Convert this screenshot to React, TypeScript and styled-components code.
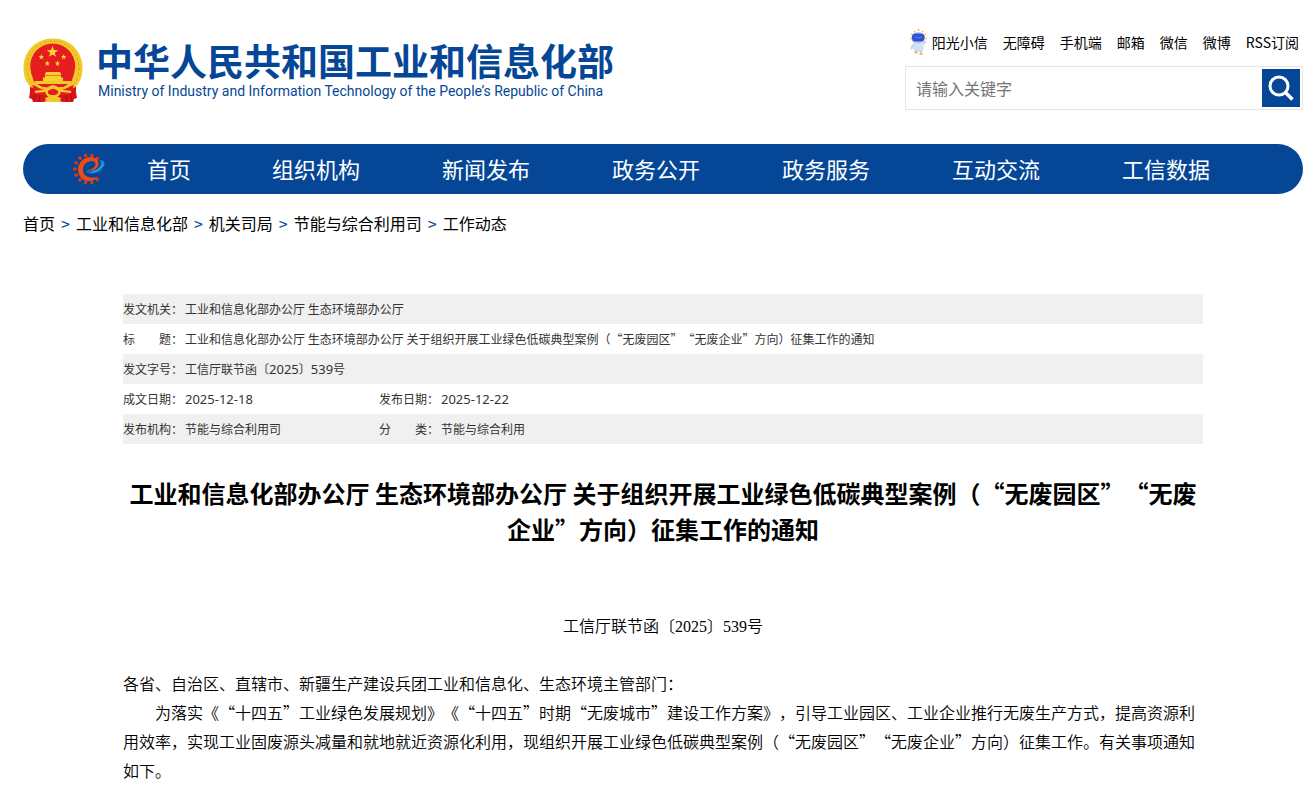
import React from 'react';
import styled, { createGlobalStyle } from 'styled-components';

const blue = '#054796';
const cjk = '"Noto Sans CJK SC", sans-serif';

const GlobalStyle = createGlobalStyle`
  *, *::before, *::after { box-sizing: border-box; }
  body {
    margin: 0;
    background: #fff;
    color: #000;
    font-family: ${cjk};
    font-size: 16px;
    text-spacing-trim: space-all;
  }
  a { color: inherit; text-decoration: none; }
`;

const Page = styled.div`
  padding: 0 11px 0 23px;
`;

const Header = styled.header`
  display: flex;
  justify-content: space-between;
  align-items: flex-start;
  height: 144px;
  padding-top: 29px;
`;

const Brand = styled.a`
  display: flex;
  gap: 13px;
  padding-top: 9px;
  color: ${blue};
`;

const BrandText = styled.span`
  display: flex;
  flex-direction: column;
  white-space: nowrap;
`;

const BrandName = styled.span`
  font-size: 37px;
  line-height: 44px;
  font-weight: 700;
`;

const BrandSub = styled.span`
  padding-left: 2px;
  font-family: Roboto, sans-serif;
  font-size: 14px;
  line-height: 18px;
`;

const Tools = styled.div`
  flex: 0 0 398px;
`;

const QuickLinks = styled.nav`
  display: flex;
  justify-content: flex-end;
  align-items: center;
  gap: 15px;
  height: 26px;
  padding-right: 4px;
  font-size: 14px;
  white-space: nowrap;
`;

const QuickLink = styled.a`
  display: flex;
  align-items: center;
  gap: 4px;
`;

const SearchForm = styled.form`
  display: flex;
  height: 44px;
  margin-top: 11px;
  padding: 2px;
  border: 1px solid #e5e5e5;
`;

const SearchInput = styled.input`
  flex: 1;
  min-width: 0;
  padding: 0 8px;
  border: 0;
  outline: 0;
  background: transparent;
  font-family: ${cjk};
  font-size: 16px;
  &::placeholder { color: #757575; }
`;

const SearchButton = styled.button`
  display: flex;
  align-items: center;
  justify-content: center;
  width: 38px;
  height: 38px;
  padding: 0;
  border: 0;
  background: ${blue};
`;

const MainNav = styled.nav`
  display: flex;
  align-items: center;
  height: 50px;
  padding: 0 52px 0 50px;
  border-radius: 25px;
  background: ${blue};
`;

const NavLink = styled.a<{ $short?: boolean }>`
  flex: ${(p) => (p.$short ? 124 : 170)} 1 0;
  padding-bottom: 2px;
  color: #fff;
  font-size: 22px;
  line-height: 48px;
  text-align: center;
  white-space: nowrap;
`;

const NavMark = styled.span`
  display: flex;
  flex: 0 0 34px;
`;

const Breadcrumb = styled.nav`
  display: flex;
  flex-wrap: wrap;
  gap: 6px;
  padding-top: 17px;
  line-height: 24px;
`;

const Separator = styled.span`
  color: ${blue};
`;

const Article = styled.main`
  padding: 59px 100px 0;
`;

const Meta = styled.table`
  width: 100%;
  border-collapse: collapse;
  table-layout: fixed;
  color: #333;
  font-size: 12px;
  line-height: 18px;
`;

const MetaRow = styled.tr`
  height: 30px;
  &:nth-child(odd) { background: #f0f0f0; }
`;

const MetaLabel = styled.th`
  padding: 0;
  font-weight: 400;
  text-align: left;
  white-space: nowrap;
`;

const LabelText = styled.span`
  display: flex;
  width: 60px;
  justify-content: space-between;
`;

const MetaValue = styled.td`
  padding: 0;
`;

const Digits = styled.span`
  font-family: "Noto Sans", sans-serif;
  font-size: 13px;
`;

const Title = styled.h1`
  margin: 31px 0 0;
  font-size: 24px;
  line-height: 36px;
  font-weight: 700;
  text-align: center;
`;

const Body = styled.div`
  padding-top: 64px;
  line-height: 29px;
  font-weight: 350;
`;

const DocNumber = styled.p`
  margin: 0 0 28px;
  text-align: center;
`;

const SerifDigits = styled.span`
  font-family: "Liberation Serif", serif;
`;

const Paragraph = styled.p<{ $indent?: boolean }>`
  margin: 0;
  text-indent: ${(p) => (p.$indent ? '2em' : '0')};
`;

const star = (cx: number, cy: number, r: number) =>
  Array.from({ length: 10 }, (_, i) => {
    const a = (Math.PI / 5) * i - Math.PI / 2;
    const d = i % 2 ? r * 0.4 : r;
    return `${(cx + d * Math.cos(a)).toFixed(2)},${(cy + d * Math.sin(a)).toFixed(2)}`;
  }).join(' ');

const Emblem = () => (
  <svg width="60" height="65" viewBox="0 0 60 65" aria-hidden="true">
    <path d="M7 46v8l-1 6 3 1 1 3h10l5-1h10l5 1h10l1-3 3-1-1-6v-8z" fill="#d8141c" />
    <path d="M30 .5C13 .5.5 13 .5 30c0 9 3 15 7 19 3 2 6 1 8 3h29c2-2 5-1 8-3 4-4 7-10 7-19C59.500 13 47 .5 30 .5z" fill="#f3c829" />
    <ellipse cx="30" cy="30" rx="26" ry="27" fill="none" stroke="#dda51c" strokeWidth="1" strokeDasharray="3 2" />
    <circle cx="29.700" cy="28" r="22.500" fill="#e51c20" />
    <path d="M8 34h43.500l-3 10-8 5H19l-8-5z" fill="#e51c20" />
    <polygon points={star(29.5, 14, 6)} fill="#fbd82f" />
    <polygon points={star(18.300, 19, 3)} fill="#fbd82f" />
    <polygon points={star(40.700, 19, 3)} fill="#fbd82f" />
    <polygon points={star(24.300, 25.500, 3)} fill="#fbd82f" />
    <polygon points={star(34.500, 25.500, 3)} fill="#fbd82f" />
    <path d="M23 34h14l1.500 3h-17zM22 37.500h16v2H22zM20 39.500h20v4H20z" fill="#f9d02c" />
    <path d="M11 43h38l-2 3H13z" fill="#f3c829" />
    <path d="M9 46c6 1 8 5 14 5 3 0 4-3 7-3s4 3 7 3c6 0 8-4 14-5l-3 11H12z" fill="#e51c20" />
    <path d="M9 46c6 1 8 5 14 5 3 0 4-3 7-3s4 3 7 3c6 0 8-4 14-5M12 54c5-1 9 0 12-2l6-3 6 3c3 2 7 1 12 2" fill="none" stroke="#f3c829" strokeWidth="2.200" />
    <ellipse cx="30" cy="54" rx="6.500" ry="4.500" fill="none" stroke="#f3c829" strokeWidth="2.500" />
    <path d="M22 60l8-3 8 3-1 4H23z" fill="#f3c829" />
    <path d="M13 56l-2 7M17 57l-1 7M47 56l2 7M43 57l1 7" stroke="#a90c12" strokeWidth="1" />
  </svg>
);

const GearMark = () => (
  <svg width="32" height="32" viewBox="0 0 32 32" aria-hidden="true">
    <g fill="#e2340f">
      {[50, 76, 102, 128, 154, 180, 206, 232, 258, 284, 310].map((a) => (
        <rect key={a} x="-1.500" y="-15.500" width="3" height="3.500" rx=".5" transform={`translate(15.500 16) rotate(${a + 90})`} />
      ))}
    </g>
    <path d="M25 23.500C21 29.500 11 29.500 7 23.500 2.500 16 6 7 14 4.500c7-2 12.500 2 11.500 7.500C24.500 16.500 18 19 13.500 17c3.500.3 8.500-2 9-5.500.3-3-3-4.500-6.500-3-6 2-8 9-4 13.500 3 3.200 8.500 3.500 13 1.500z" fill="#f04a14" />
    <path d="M12.500 17.500c4 2.500 12 1 15-5 .8-2 .2-4-1.500-5 3-.7 6.500.3 5.500 3.500-1.500 5.500-7.500 10-13 9.500-3-.3-5-1-6-3z" fill="#1686cf" />
    <path d="M19 18.500c5-.5 9-3.500 11-8" fill="none" stroke="#5cb6e6" strokeWidth=".8" />
  </svg>
);

const Robot = () => (
  <svg width="19" height="26" viewBox="0 0 19 26" aria-hidden="true">
    <path d="M5 2l1 1M9.500 0v2M14 2l-1 1M2 5l1.500 1M17 5l-1.500 1M1 9.500h1.500M16.500 9.500H18M2 18h1.500" stroke="#f5bd2c" strokeWidth="1.500" />
    <ellipse cx="9" cy="9" rx="6.800" ry="6" fill="#b9c9f2" />
    <rect x="3" y="4.500" width="12.500" height="8" rx="3.500" fill="#3150cf" />
    <path d="M6 8c2 1 5 1 7 0" stroke="#5f87e6" fill="none" />
    <path d="M5 14c3 1.500 6 1.500 9 0l1 6-3 3H7l-3-3z" fill="#d3e0f5" />
    <path d="M5 15l-3 5M14 15l3-3M7 21v3M12 21v3" stroke="#c3d4ef" strokeWidth="2" />
    <path d="M5.500 23.500h3M10.500 25h3" stroke="#f0a92a" strokeWidth="1.500" />
  </svg>
);

const quickLinks = ['无障碍', '手机端', '邮箱', '微信', '微博', 'RSS订阅'];
const navLinks = ['组织机构', '新闻发布', '政务公开', '政务服务', '互动交流', '工信数据'];
const crumbs = ['首页', '工业和信息化部', '机关司局', '节能与综合利用司', '工作动态'];
const docTitle = '工业和信息化部办公厅 生态环境部办公厅 关于组织开展工业绿色低碳典型案例（“无废园区”“无废企业”方向）征集工作的通知';

const Label = ({ children }: { children: string }) => (
  <MetaLabel scope="row">
    {children.length === 2 ? (
      <LabelText>
        <span>{children[0]}</span>
        <span>{children[1]}：</span>
      </LabelText>
    ) : (
      `${children}：`
    )}
  </MetaLabel>
);

export default function App() {
  return (
    <Page lang="zh-CN">
      <GlobalStyle />
      <Header>
        <Brand href="#">
          <Emblem />
          <BrandText>
            <BrandName>中华人民共和国工业和信息化部</BrandName>
            <BrandSub lang="en">Ministry of Industry and Information Technology of the People’s Republic of China</BrandSub>
          </BrandText>
        </Brand>
        <Tools>
          <QuickLinks>
            <QuickLink href="#">
              <Robot />
              阳光小信
            </QuickLink>
            {quickLinks.map((t) => (
              <QuickLink href="#" key={t}>{t}</QuickLink>
            ))}
          </QuickLinks>
          <SearchForm onSubmit={(e) => e.preventDefault()}>
            <SearchInput type="text" placeholder="请输入关键字" aria-label="请输入关键字" />
            <SearchButton type="submit" aria-label="搜索">
              <svg width="26" height="26" viewBox="0 0 26 26" fill="none" stroke="#fff" strokeWidth="3">
                <circle cx="11" cy="11" r="9" />
                <path d="M17.500 17.500l7 7" strokeWidth="3.500" />
              </svg>
            </SearchButton>
          </SearchForm>
        </Tools>
      </Header>

      <MainNav>
        <NavMark><GearMark /></NavMark>
        <NavLink href="#" $short>首页</NavLink>
        {navLinks.map((t) => (
          <NavLink href="#" key={t}>{t}</NavLink>
        ))}
      </MainNav>

      <Breadcrumb>
        {crumbs.map((t, i) => (
          <React.Fragment key={t}>
            {i > 0 && <Separator>&gt;</Separator>}
            <a href="#">{t}</a>
          </React.Fragment>
        ))}
      </Breadcrumb>

      <Article>
        <Meta>
          <colgroup>
            <col style={{ width: 62 }} />
            <col style={{ width: 194 }} />
            <col style={{ width: 62 }} />
            <col />
          </colgroup>
          <tbody>
            <MetaRow>
              <Label>发文机关</Label>
              <MetaValue colSpan={3}>工业和信息化部办公厅 生态环境部办公厅</MetaValue>
            </MetaRow>
            <MetaRow>
              <Label>标题</Label>
              <MetaValue colSpan={3}>{docTitle}</MetaValue>
            </MetaRow>
            <MetaRow>
              <Label>发文字号</Label>
              <MetaValue colSpan={3}>
                工信厅联节函〔<Digits>2025</Digits>〕<Digits>539</Digits>号
              </MetaValue>
            </MetaRow>
            <MetaRow>
              <Label>成文日期</Label>
              <MetaValue><Digits>2025-12-18</Digits></MetaValue>
              <Label>发布日期</Label>
              <MetaValue><Digits>2025-12-22</Digits></MetaValue>
            </MetaRow>
            <MetaRow>
              <Label>发布机构</Label>
              <MetaValue>节能与综合利用司</MetaValue>
              <Label>分类</Label>
              <MetaValue>节能与综合利用</MetaValue>
            </MetaRow>
          </tbody>
        </Meta>

        <Title>{docTitle}</Title>

        <Body>
          <DocNumber>
            工信厅联节函〔<SerifDigits>2025</SerifDigits>〕<SerifDigits>539</SerifDigits>号
          </DocNumber>
          <Paragraph>各省、自治区、直辖市、新疆生产建设兵团工业和信息化、生态环境主管部门：</Paragraph>
          <Paragraph $indent>
            为落实《“十四五”工业绿色发展规划》《“十四五”时期“无废城市”建设工作方案》，引导工业园区、工业企业推行无废生产方式，提高资源利用效率，实现工业固废源头减量和就地就近资源化利用，现组织开展工业绿色低碳典型案例（“无废园区”“无废企业”方向）征集工作。有关事项通知如下。
          </Paragraph>
        </Body>
      </Article>
    </Page>
  );
}
